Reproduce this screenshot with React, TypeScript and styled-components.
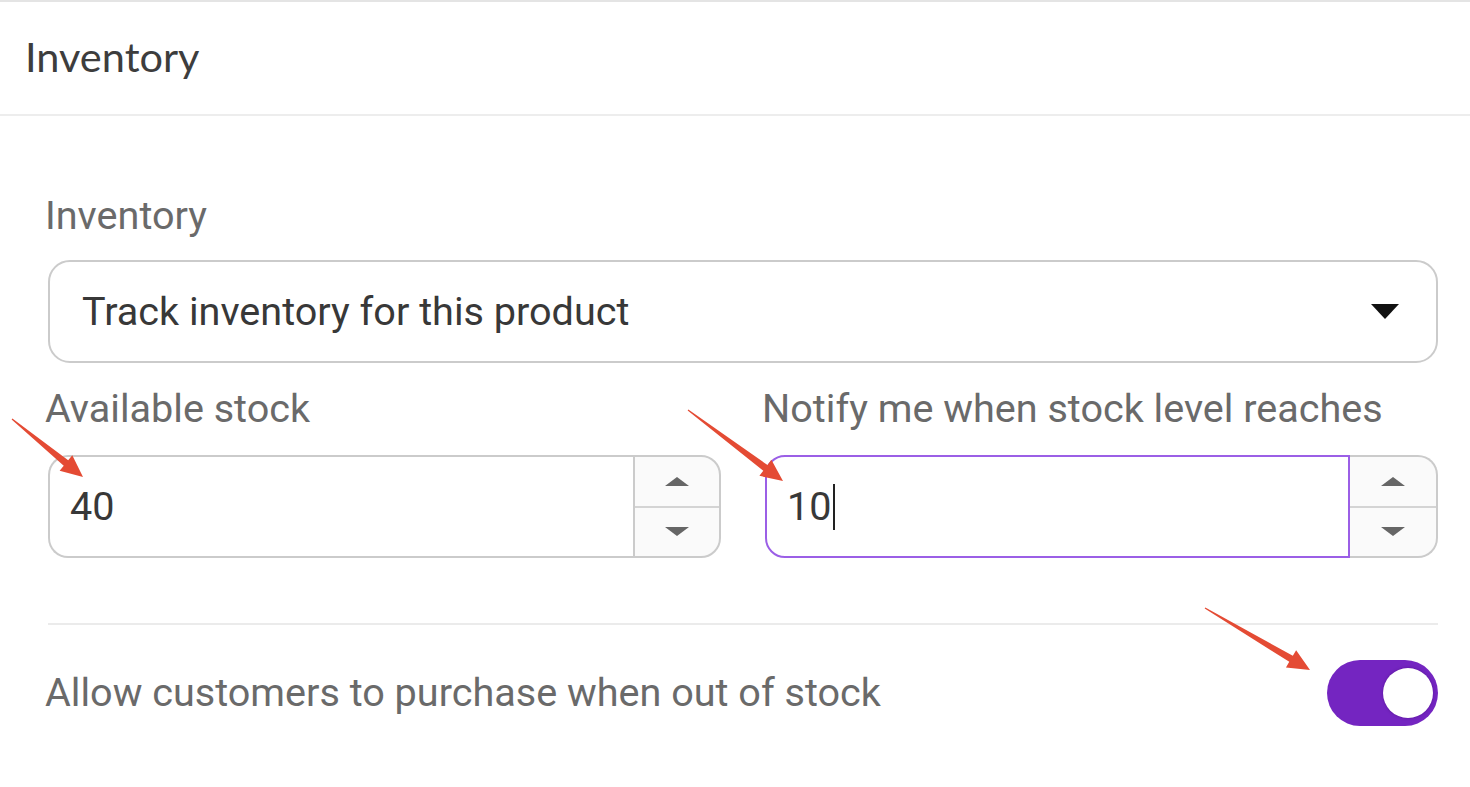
import React from "react"
import styled, { createGlobalStyle } from "styled-components"

const GlobalStyle = createGlobalStyle`
    html, body {
        margin: 0;
        padding: 0;
        background: #ffffff;
    }
    body {
        font-family: Roboto, "Liberation Sans", sans-serif;
        color: #333333;
    }
`

const Page = styled.div`
    position: relative;
    width: 1470px;
    min-height: 787px;
    border-top: 2px solid #e4e4e4;
    box-sizing: border-box;
`

const Header = styled.div`
    padding: 30px 25px 34px;
    border-bottom: 2px solid #ededed;
`

const Title = styled.h2`
    margin: 0;
    font-family: Lato, "Open Sans", sans-serif;
    font-weight: 400;
    font-size: 41.5px;
    line-height: 48px;
    color: #3d3d3d;
`

const Body = styled.div`
    padding: 76px 32px 0 48px;
`

const Label = styled.div`
    font-size: 39.6px;
    line-height: 48px;
    color: #6a6a6a;
    margin-left: -3px;
    white-space: nowrap;
`

const Select = styled.div`
    margin-top: 20px;
    height: 103px;
    box-sizing: border-box;
    border: 2px solid #cbcbcb;
    border-radius: 22px;
    display: flex;
    align-items: center;
    justify-content: space-between;
    padding: 0 37px 0 32px;
    font-size: 39.6px;
    color: #383838;
`

const Caret = styled.span`
    width: 0;
    height: 0;
    border-left: 14px solid transparent;
    border-right: 14px solid transparent;
    border-top: 15px solid #111111;
`

const FieldRow = styled.div`
    margin-top: 22px;
    display: grid;
    grid-template-columns: 1fr 1fr;
    column-gap: 44px;
`

const FieldGroup = styled.div`
    display: flex;
    flex-direction: column;
`

const NumberBox = styled.div`
    margin-top: 22px;
    height: 103px;
    display: flex;
`

const NumberField = styled.div<{ $focused?: boolean }>`
    flex: 1;
    box-sizing: border-box;
    display: flex;
    align-items: center;
    padding-left: 20px;
    font-size: 39.6px;
    color: #383838;
    border: 2px solid ${p => (p.$focused ? "#9b5fe6" : "#cbcbcb")};
    border-right: ${p => (p.$focused ? "2px solid #9b5fe6" : "none")};
    border-radius: 20px 0 0 20px;
`

const TextCursor = styled.span`
    display: inline-block;
    width: 2px;
    height: 46px;
    background: #222222;
    margin-left: 1px;
`

const Spinner = styled.div<{ $joined?: boolean }>`
    width: 88px;
    box-sizing: border-box;
    display: flex;
    flex-direction: column;
    border: 2px solid #cbcbcb;
    border-left: ${p => (p.$joined ? "none" : "2px solid #cbcbcb")};
    border-radius: 0 20px 20px 0;
    background: #fafafa;
    overflow: hidden;
`

const SpinHalf = styled.div`
    flex: 1;
    display: flex;
    align-items: center;
    justify-content: center;
    & + & {
        border-top: 2px solid #d4d4d4;
    }
`

const SpinArrow = styled.span<{ $down?: boolean }>`
    width: 0;
    height: 0;
    border-left: 12px solid transparent;
    border-right: 12px solid transparent;
    ${p => (p.$down ? "border-top: 9px solid #666666;" : "border-bottom: 9px solid #666666;")}
`

const Divider = styled.hr`
    margin: 65px 0 0;
    border: none;
    border-top: 2px solid #ebebeb;
`

const ToggleRow = styled.div`
    margin-top: 35px;
    display: flex;
    align-items: center;
    justify-content: space-between;
`

const Toggle = styled.div`
    width: 111px;
    height: 66px;
    border-radius: 33px;
    background: #7425c1;
    display: flex;
    align-items: center;
    justify-content: flex-end;
    padding-right: 5px;
    box-sizing: border-box;
`

const Knob = styled.span`
    width: 50px;
    height: 50px;
    border-radius: 50%;
    background: #ffffff;
    box-shadow: 0 0 3px rgba(60, 0, 110, 0.5);
`

const Overlay = styled.svg`
    position: absolute;
    left: 0;
    top: -2px;
    pointer-events: none;
`

interface ArrowProps {
    from: [number, number]
    to: [number, number]
}

// tapered red annotation arrow
const Arrow = ({ from, to }: ArrowProps) => {
    const [x1, y1] = from
    const [x2, y2] = to
    const len = Math.hypot(x2 - x1, y2 - y1)
    const dx = (x2 - x1) / len
    const dy = (y2 - y1) / len
    const nx = -dy
    const ny = dx
    const headLen = 22
    const bx = x2 - dx * headLen
    const by = y2 - dy * headLen
    const pt = (x: number, y: number, w: number) => `${x + nx * w},${y + ny * w}`
    const points = [
        pt(x1, y1, 0.6),
        pt(bx, by, 3.5),
        pt(bx, by, 10),
        `${x2},${y2}`,
        pt(bx, by, -10),
        pt(bx, by, -3.5),
        pt(x1, y1, -0.6),
    ].join(" ")
    return <polygon points={points} fill="#e44b34" />
}

const App = () => {
    return (
        <Page>
            <GlobalStyle />
            <Header>
                <Title>Inventory</Title>
            </Header>
            <Body>
                <Label>Inventory</Label>
                <Select>
                    <span>Track inventory for this product</span>
                    <Caret />
                </Select>
                <FieldRow>
                    <FieldGroup>
                        <Label>Available stock</Label>
                        <NumberBox>
                            <NumberField>40</NumberField>
                            <Spinner>
                                <SpinHalf><SpinArrow /></SpinHalf>
                                <SpinHalf><SpinArrow $down /></SpinHalf>
                            </Spinner>
                        </NumberBox>
                    </FieldGroup>
                    <FieldGroup>
                        <Label>Notify me when stock level reaches</Label>
                        <NumberBox>
                            <NumberField $focused>10<TextCursor /></NumberField>
                            <Spinner $joined>
                                <SpinHalf><SpinArrow /></SpinHalf>
                                <SpinHalf><SpinArrow $down /></SpinHalf>
                            </Spinner>
                        </NumberBox>
                    </FieldGroup>
                </FieldRow>
                <Divider />
                <ToggleRow>
                    <Label>Allow customers to purchase when out of stock</Label>
                    <Toggle>
                        <Knob />
                    </Toggle>
                </ToggleRow>
            </Body>
            <Overlay width="1470" height="787">
                <Arrow from={[12, 419]} to={[83, 477]} />
                <Arrow from={[688, 410]} to={[783, 481]} />
                <Arrow from={[1205, 608]} to={[1310, 670]} />
            </Overlay>
        </Page>
    )
}

export default App
